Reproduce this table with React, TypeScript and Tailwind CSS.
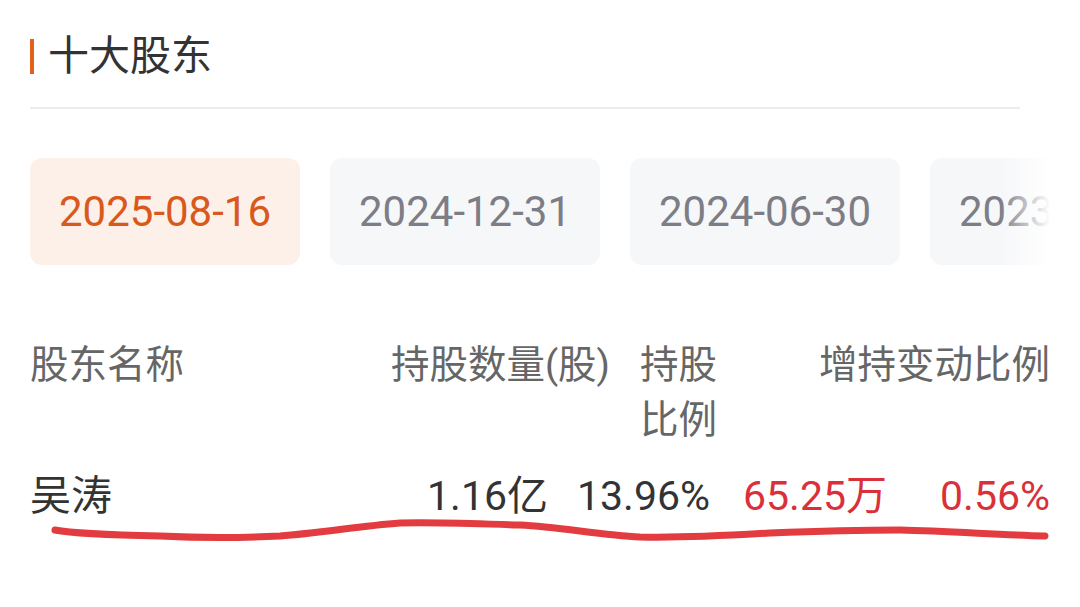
const dates = ["2025-08-16", "2024-12-31", "2024-06-30", "2023-12-31"];

export default function App() {
  return (
    <div
      className="relative w-[1080px] h-[607px] bg-white overflow-hidden px-[30px] pt-[28px]"
      style={{ fontFamily: "Roboto, 'Noto Sans CJK SC', sans-serif" }}
    >
      {/* 标题 */}
      <div className="flex items-center h-[56px]">
        <div className="w-[4px] h-[35px] bg-[#e0601c]" />
        <div className="ml-[14px] text-[41px] leading-none text-[#333333]">十大股东</div>
      </div>
      <div className="mt-[23px] h-[2px] w-[990px] bg-[#ececec]" />

      {/* 日期标签 */}
      <div className="relative mt-[49px] w-[1020px] overflow-hidden">
        <div className="flex gap-[30px]">
          {dates.map((d, i) => (
            <div
              key={d}
              className={
                i === 0
                  ? "shrink-0 w-[270px] h-[107px] rounded-[12px] bg-[#fdf0e9] text-[#d9581b] flex items-center justify-center text-[42px]"
                  : "shrink-0 w-[270px] h-[107px] rounded-[12px] bg-[#f6f7f9] text-[#7d7d86] flex items-center justify-center text-[42px]"
              }
            >
              {d}
            </div>
          ))}
        </div>
        <div className="absolute right-0 top-0 h-full w-[50px] bg-gradient-to-r from-white/0 to-white" />
      </div>

      {/* 表头 */}
      <div className="mt-[72px] flex text-[38.5px] leading-[55px] text-[#666666]">
        <div className="w-[580px] flex justify-between">
          <span>股东名称</span>
          <span>持股数量(股)</span>
        </div>
        <div className="ml-[30px] w-[80px]">持股比例</div>
        <div className="flex-1 text-right">增持变动比例</div>
      </div>

      {/* 数据行 */}
      <div className="mt-[22px] flex text-[41px] leading-[55px] text-[#333333]">
        <div className="w-[120px]">吴涛</div>
        <div className="w-[398px] text-right">1.16亿</div>
        <div className="w-[162px] text-right">13.96%</div>
        <div className="w-[177px] text-right text-[#d9303a]">65.25万</div>
        <div className="flex-1 text-right text-[#d9303a]">0.56%</div>
      </div>

      {/* 手绘下划线 */}
      <svg className="absolute left-0 top-0" width="1080" height="607" viewBox="0 0 1080 607">
        <path
          d="M55 530 C 70 533, 110 535, 160 536 C 200 538, 240 538, 280 536 C 320 533, 360 526, 400 523 C 440 522, 480 524, 520 525 C 560 527, 600 535, 640 537 C 680 538, 720 536, 770 533 C 820 531, 860 530, 900 530 C 950 531, 1000 535, 1045 536"
          fill="none"
          stroke="#e23c40"
          strokeWidth="7"
          strokeLinecap="round"
        />
      </svg>
    </div>
  );
}
